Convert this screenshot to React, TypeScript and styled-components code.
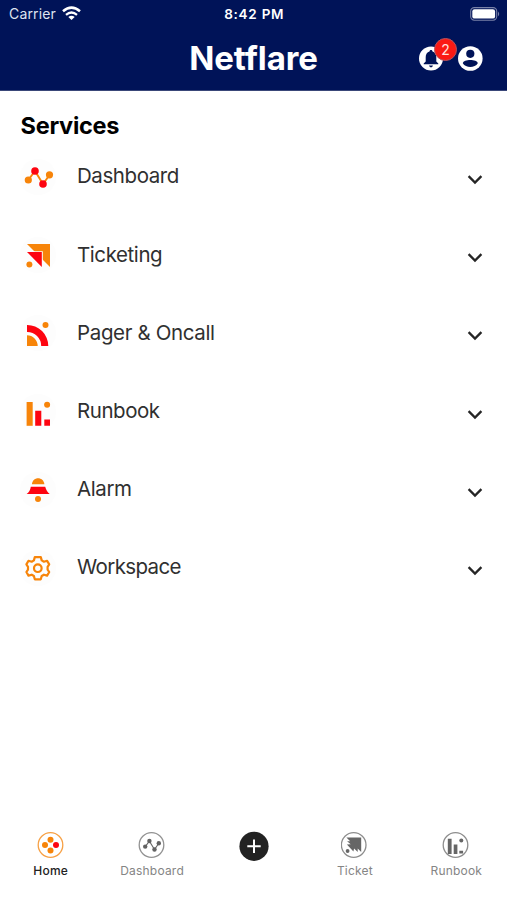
import React from "react";
import styled, { createGlobalStyle } from "styled-components";

const ORANGE = "#f78409";
const RED = "#fd0410";
const NAVY = "#001358";

const GlobalStyle = createGlobalStyle`
  * { box-sizing: border-box; }
  body { margin: 0; background: #fff; font-family: Inter, "Liberation Sans", sans-serif; }
  svg { display: block; flex: none; }
`;

const Screen = styled.div`
  width: 507px;
  height: 900px;
  display: flex;
  flex-direction: column;
  background: #fff;
  overflow: hidden;
`;

const Header = styled.header`
  height: 91px;
  background: ${NAVY};
  color: #fff;
  border-bottom: 1px solid #3a4779;
`;

const StatusBar = styled.div`
  height: 27px;
  display: grid;
  grid-template-columns: 1fr auto 1fr;
  align-items: center;
  padding: 0 7px 0 9px;
`;

const Carrier = styled.div`
  display: flex;
  align-items: center;
  gap: 6px;
  font-size: 14px;
  line-height: 26px;
  padding-bottom: 1px;
  letter-spacing: 0.15px;
  color: #dfe3f0;
`;

const Clock = styled.div`
  font-size: 13.5px;
  font-weight: 600;
  line-height: 28px;
  letter-spacing: 0.75px;
  margin-right: 0.5px;
`;

const BatterySlot = styled.div`
  display: flex;
  justify-content: flex-end;
`;

const TitleBar = styled.div`
  height: 63px;
  display: grid;
  grid-template-columns: 1fr auto 1fr;
  align-items: center;
  padding: 0 24px 0 24px;
`;

const Title = styled.h1`
  grid-column: 2;
  margin: 0;
  padding-bottom: 2px;
  font-size: 33px;
  font-weight: 700;
  line-height: 40px;
  letter-spacing: -0.1px;
`;

const Actions = styled.div`
  display: flex;
  justify-content: flex-end;
  gap: 14px;
`;

const BellButton = styled.div`
  position: relative;
  width: 25px;
  height: 25px;
`;

const Badge = styled.span`
  position: absolute;
  left: 15px;
  top: -8px;
  width: 23px;
  height: 23px;
  border-radius: 50%;
  background: #fb1a14;
  border: 1px solid #b5545f;
  font-size: 14px;
  line-height: 21px;
  text-align: center;
  color: #ffe3df;
`;

const Main = styled.main`
  flex: 1;
  padding: 20px 23px 0 18px;
`;

const Heading = styled.h2`
  margin: 0 0 0 2.5px;
  height: 46px;
  font-size: 23.5px;
  line-height: 30px;
  font-weight: 700;
  letter-spacing: -0.25px;
  color: #000;
`;

const ServiceRow = styled.div`
  height: 78.2px;
  display: flex;
  align-items: flex-start;
`;

const ServiceName = styled.span<{ $tracking: number }>`
  flex: 1;
  margin-left: 19px;
  padding-top: 0.4px;
  font-size: 20.5px;
  line-height: 38px;
  color: #303030;
  letter-spacing: ${(p) => p.$tracking}px;
`;

const ChevronSlot = styled.span`
  padding-top: 17px;
`;

const TabBar = styled.nav`
  height: 75px;
  display: grid;
  grid-template-columns: repeat(5, 1fr);
`;

const Tab = styled.div<{ $active?: boolean }>`
  display: flex;
  flex-direction: column;
  align-items: center;
  padding-top: 6px;
  gap: 4px;
  font-size: 12px;
  line-height: 16px;
  letter-spacing: 0.2px;
  font-weight: ${(p) => (p.$active ? 500 : 400)};
  color: ${(p) => (p.$active ? "#222" : "#858585")};
`;

const AddTab = styled(Tab)`
  padding-left: 1px;
`;

const Wifi = () => (
  <svg width="19" height="15" viewBox="0 0 19 15" fill="none" stroke="#fff">
    <path d="M1 5.2Q9.5-1.8 18 5.2" strokeWidth="2.6" />
    <path d="M4 8.8Q9.5 4.3 15 8.8" strokeWidth="2.3" />
    <path d="M6.3 10.9Q9.5 8.6 12.7 10.9L9.5 14Z" fill="#fff" stroke="none" />
  </svg>
);

const Battery = () => (
  <svg width="30" height="14" viewBox="0 0 30 14">
    <rect x="0.7" y="0.6" width="26" height="12.6" rx="3.6" fill="none" stroke="#7881a7" strokeWidth="1.1" />
    <rect x="2.3" y="2.2" width="22.8" height="9.4" rx="2.2" fill="#fff" />
    <path d="M28 4.5Q30.4 6.9 28 9.3Z" fill="#7881a7" />
  </svg>
);

const Bell = () => (
  <svg width="25" height="25" viewBox="0 0 25 25">
    <circle cx="12" cy="12.5" r="12" fill="#fff" />
    <path d="M12 4.1c.9 0 1.5.7 1.5 1.5 2.5.8 3.8 2.8 3.8 5.6v4.2l2 2v.9H4.7v-.9l2-2v-4.2c0-2.8 1.3-4.8 3.8-5.6 0-.8.6-1.5 1.5-1.5Z" fill={NAVY} />
    <path d="M10 19.6h4q-.4 1.8-2 1.8t-2-1.8Z" fill={NAVY} />
  </svg>
);

const Account = () => (
  <svg width="25" height="25" viewBox="0 0 25 25">
    <circle cx="12.3" cy="12.5" r="12.3" fill="#fff" />
    <circle cx="12.3" cy="7.8" r="4.1" fill={NAVY} />
    <path d="M4.8 17.2C5.3 12.8 19.3 12.8 19.8 17.2C16.8 22.2 7.8 22.2 4.8 17.2Z" fill={NAVY} />
  </svg>
);

const Chevron = () => (
  <svg width="18" height="11" viewBox="0 0 18 11" fill="none" stroke="#252525" strokeWidth="2.3">
    <path d="M2.6 2.1L9 8.5L15.4 2.1" />
  </svg>
);

const Tile = ({ children }: { children: React.ReactNode }) => (
  <svg width="40" height="40" viewBox="0 0 40 40">
    <circle cx="20" cy="20" r="18" fill="#fdfdfd" />
    {children}
  </svg>
);

const DashboardIcon = () => (
  <Tile>
    <path d="M10.3 23L17 14L25 27L31.7 17.8" fill="none" stroke={ORANGE} strokeWidth="1.9" />
    <circle cx="10.3" cy="23" r="3.6" fill={ORANGE} />
    <circle cx="17" cy="14" r="3.8" fill={RED} />
    <circle cx="25" cy="27" r="3.8" fill={RED} />
    <circle cx="31.5" cy="17.8" r="3.6" fill={ORANGE} />
  </Tile>
);

const TicketingIcon = () => (
  <Tile>
    <path d="M9 9H32V32Z" fill={ORANGE} />
    <path d="M7.5 16.2H24.8V33.5Z" fill="#fdfdfd" />
    <path d="M9 17H23.8V32Z" fill={RED} />
    <circle cx="11.4" cy="29.4" r="3" fill={ORANGE} />
  </Tile>
);

const PagerIcon = () => (
  <Tile>
    <path d="M9 12A21 21 0 0 1 30.3 33H23.2A14 14 0 0 0 9 19Z" fill={RED} />
    <path d="M9 22.3A10.7 10.7 0 0 1 19.7 33H9Z" fill={ORANGE} />
    <circle cx="27.5" cy="12" r="3" fill={ORANGE} />
  </Tile>
);

const RunbookIcon = () => (
  <Tile>
    <path d="M8.6 10H14.7V33.8H8.6Z" fill={ORANGE} />
    <path d="M17.2 18.7H23.3V33.8H17.2ZM26.3 27.6H32V33.8H26.3Z" fill={RED} />
    <circle cx="29.1" cy="12.8" r="3" fill={ORANGE} />
  </Tile>
);

const AlarmIcon = () => (
  <Tile>
    <path d="M13.9 14.2C14.7 6.2 25.5 6.2 26.4 14.2Z" fill={ORANGE} />
    <path d="M12.8 16.7H27.2Q28.7 22 31.7 23.9H8.6Q12 22 12.8 16.7Z" fill={RED} />
    <circle cx="20" cy="29" r="3" fill={ORANGE} />
  </Tile>
);

const WorkspaceIcon = () => (
  <Tile>
    <g fill="none" stroke={ORANGE} strokeWidth="2.2" strokeLinejoin="round">
      <circle cx="19.8" cy="20.2" r="3.8" />
      <path d="M16.8 9.1H22.8L23.7 12.4L25.9 13.7L29.1 12.8L31.2 16.4L29.6 18.8V21.6L31.2 24L29.1 27.6L25.9 26.7L23.7 28L22.8 31.3H16.8L15.9 28L13.7 26.7L10.5 27.6L8.4 24L10 21.6V18.8L8.4 16.4L10.5 12.8L13.7 13.7L15.9 12.4Z" />
    </g>
  </Tile>
);

const TabRing = ({ color, children }: { color: string; children: React.ReactNode }) => (
  <svg width="28" height="28" viewBox="0 0 28 28">
    <circle cx="13.5" cy="14" r="12.3" fill="none" stroke={color} strokeWidth="1.3" />
    {children}
  </svg>
);

const HomeTabIcon = () => (
  <TabRing color="#f7a044">
    <g fill={ORANGE}>
      <circle cx="13.5" cy="8.7" r="3" />
      <circle cx="8" cy="14.1" r="3" />
      <circle cx="13.5" cy="19.5" r="3" />
    </g>
    <circle cx="19" cy="14.1" r="3" fill={RED} />
  </TabRing>
);

const DashboardTabIcon = () => (
  <TabRing color="#929292">
    <path d="M7.2 15.6L11.4 10.1L16.5 18.5L20.8 12.3" fill="none" stroke="#666" strokeWidth="1.1" />
    <g fill="#626262">
      <circle cx="7.2" cy="15.6" r="2.2" />
      <circle cx="11.4" cy="10" r="2.2" />
      <circle cx="16.5" cy="18.5" r="2.2" />
      <circle cx="20.8" cy="12.3" r="2.2" />
    </g>
  </TabRing>
);

const TicketTabIcon = () => (
  <svg width="28" height="28" viewBox="0.8 0 28 28">
    <circle cx="13.5" cy="14" r="12.3" fill="none" stroke="#8d8d8d" strokeWidth="1.3" />
    <path d="M6.2 6.5H21V21L17.5 17.6V21L13.9 17.5L13.2 20.5L6.7 13.4L10.5 13.3L6.9 10.2H10Z" fill="#666" />
    <circle cx="7.4" cy="20" r="1.9" fill="#666" />
  </svg>
);

const RunbookTabIcon = () => (
  <TabRing color="#8d8d8d">
    <path d="M5.8 7.8H9.6V23H5.8ZM11.7 13.4H15.4V23H11.7ZM17.3 19.7H21.1V22.6H17.3Z" fill="#666" />
    <circle cx="19.3" cy="9.6" r="2" fill="#666" />
  </TabRing>
);

const AddIcon = () => (
  <svg width="30" height="30" viewBox="0 0 30 30">
    <circle cx="15" cy="15.3" r="14.6" fill="#222" />
    <path d="M8.3 15.3H21.7M15 8.6V22" stroke="#fff" strokeWidth="2" />
  </svg>
);

const services = [
  { name: "Dashboard", Icon: DashboardIcon, tracking: -0.42 },
  { name: "Ticketing", Icon: TicketingIcon, tracking: -0.42 },
  { name: "Pager & Oncall", Icon: PagerIcon, tracking: -0.36 },
  { name: "Runbook", Icon: RunbookIcon, tracking: -0.45 },
  { name: "Alarm", Icon: AlarmIcon, tracking: -0.4 },
  { name: "Workspace", Icon: WorkspaceIcon, tracking: -0.62 },
];

export default function App() {
  return (
    <Screen>
      <GlobalStyle />
      <Header>
        <StatusBar>
          <Carrier>Carrier <Wifi /></Carrier>
          <Clock>8:42 PM</Clock>
          <BatterySlot><Battery /></BatterySlot>
        </StatusBar>
        <TitleBar>
          <Title>Netflare</Title>
          <Actions>
            <BellButton><Bell /><Badge>2</Badge></BellButton>
            <Account />
          </Actions>
        </TitleBar>
      </Header>
      <Main>
        <Heading>Services</Heading>
        {services.map(({ name, Icon, tracking }) => (
          <ServiceRow key={name}>
            <Icon />
            <ServiceName $tracking={tracking}>{name}</ServiceName>
            <ChevronSlot><Chevron /></ChevronSlot>
          </ServiceRow>
        ))}
      </Main>
      <TabBar>
        <Tab $active><HomeTabIcon />Home</Tab>
        <Tab><DashboardTabIcon />Dashboard</Tab>
        <AddTab><AddIcon /></AddTab>
        <Tab><TicketTabIcon />Ticket</Tab>
        <Tab><RunbookTabIcon />Runbook</Tab>
      </TabBar>
    </Screen>
  );
}
